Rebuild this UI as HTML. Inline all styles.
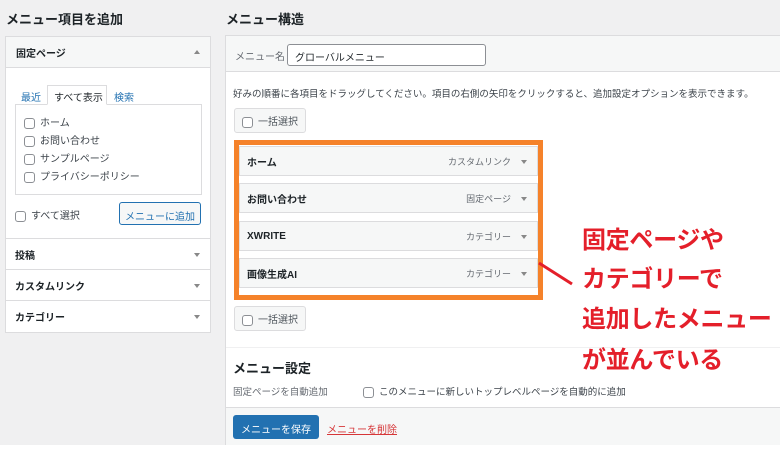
<!DOCTYPE html>
<html><head><meta charset="utf-8"><style>
*{box-sizing:border-box;margin:0;padding:0}
body{width:780px;height:455px;background:#fff;font-family:"Liberation Sans","Noto Sans CJK JP",sans-serif;color:#1d2327;position:relative;overflow:hidden;font-size:10px}
.a{position:absolute}
.bg{left:0;top:0;width:780px;height:445px;background:#f0f0f1}
h2{font-size:13px;font-weight:bold}
.box{background:#fff;border:1px solid #dcdcde}
.cb{display:inline-block;width:11px;height:11px;border:1px solid #8c8f94;border-radius:3px;background:#fff;vertical-align:middle;margin-right:5px}
.sec{left:6px;width:204px;height:31px;border-top:1px solid #dcdcde;font-weight:bold;font-size:10px;padding:0 0 0 9px;display:flex;align-items:center}
.tri{position:absolute;right:10px;top:14px;width:0;height:0;border-left:3px solid transparent;border-right:3px solid transparent;border-top:4px solid #888}
.item{left:239px;width:299px;height:30px;background:#f6f7f7;border:1px solid #dcdcde;font-weight:bold;font-size:10px;padding:0 0 0 7px;display:flex;align-items:center}
.item .t{position:absolute;right:26px;top:8px;font-weight:normal;color:#646970;font-size:9px}
.item .tri{right:10px;top:13px}
.red{color:#e41f2a;font-weight:bold;font-size:24px;left:582px;white-space:nowrap;letter-spacing:-0.3px}
.btn{border:1px solid #dcdcde;background:#f6f7f7;border-radius:3px;font-size:10px;color:#50575e;padding:4px 7px}
</style></head><body>
<div class="a bg"></div>
<h2 class="a" style="left:6px;top:9px">メニュー項目を追加</h2>
<h2 class="a" style="left:226px;top:9px">メニュー構造</h2>

<div class="a box" style="left:5px;top:36px;width:206px;height:297px"></div>
<div class="a" style="left:6px;top:37px;width:204px;height:31px;background:#f6f7f7;border-bottom:1px solid #dcdcde;font-weight:bold;padding:0 0 0 10px;display:flex;align-items:center">固定ページ<span style="position:absolute;right:10px;top:13px;border-left:3px solid transparent;border-right:3px solid transparent;border-bottom:4px solid #888"></span></div>
<div class="a" style="left:21px;top:89px;color:#2271b1">最近</div>
<div class="a" style="left:47px;top:85px;width:60px;height:20px;border:1px solid #dcdcde;border-bottom:1px solid #fff;background:#fff;padding:3px 0 0 6px;z-index:2">すべて表示</div>
<div class="a" style="left:114px;top:89px;color:#2271b1">検索</div>
<div class="a" style="left:15px;top:104px;width:187px;height:91px;border:1px solid #dcdcde;background:#fff"></div>
<div class="a" style="left:24px;top:115px;line-height:18px;color:#3c434a">
<div><span class="cb"></span>ホーム</div><div><span class="cb"></span>お問い合わせ</div><div><span class="cb"></span>サンプルページ</div><div><span class="cb"></span>プライバシーポリシー</div></div>
<div class="a" style="left:15px;top:207px;color:#3c434a"><span class="cb"></span>すべて選択</div>
<div class="a" style="left:119px;top:202px;width:82px;height:23px;border:1px solid #2271b1;border-radius:3px;background:#f6f7f7;color:#2271b1;text-align:center;padding-top:5px">メニューに追加</div>
<div class="a sec" style="top:238px">投稿<span class="tri"></span></div>
<div class="a sec" style="top:269px">カスタムリンク<span class="tri"></span></div>
<div class="a sec" style="top:300px">カテゴリー<span class="tri"></span></div>

<div class="a box" style="left:225px;top:35px;width:560px;height:410px;border-right:none"></div>
<div class="a" style="left:226px;top:36px;width:554px;height:36px;background:#f6f7f7;border-bottom:1px solid #dcdcde"></div>
<div class="a" style="left:235px;top:48px;color:#646970">メニュー名</div>
<div class="a" style="left:287px;top:44px;width:199px;height:22px;border:1px solid #8c8f94;border-radius:3px;background:#fff;padding:4px 0 0 7px">グローバルメニュー</div>
<div class="a" style="left:233px;top:86px;font-size:9.5px;color:#3c434a;white-space:nowrap">好みの順番に各項目をドラッグしてください。項目の右側の矢印をクリックすると、追加設定オプションを表示できます。</div>
<div class="a btn" style="left:234px;top:108px"><span class="cb"></span>一括選択</div>

<div class="a" style="left:234px;top:140px;width:309px;height:160px;border:5px solid #f5822a"></div>
<div class="a item" style="top:146px">ホーム<span class="t">カスタムリンク</span><span class="tri"></span></div>
<div class="a item" style="top:183px">お問い合わせ<span class="t">固定ページ</span><span class="tri"></span></div>
<div class="a item" style="top:221px">XWRITE<span class="t">カテゴリー</span><span class="tri"></span></div>
<div class="a item" style="top:258px">画像生成AI<span class="t">カテゴリー</span><span class="tri"></span></div>

<div class="a btn" style="left:234px;top:306px"><span class="cb"></span>一括選択</div>
<div class="a" style="left:226px;top:347px;width:554px;border-top:1px solid #f0f0f1"></div>
<div class="a" style="left:233px;top:358px;font-size:13px;font-weight:bold">メニュー設定</div>
<div class="a" style="left:233px;top:384px;color:#646970;font-size:9.5px">固定ページを自動追加</div>
<div class="a" style="left:363px;top:384px;color:#3c434a;font-size:9.5px"><span class="cb"></span>このメニューに新しいトップレベルページを自動的に追加</div>
<div class="a" style="left:226px;top:407px;width:554px;height:38px;background:#f6f7f7;border-top:1px solid #dcdcde"></div>
<div class="a" style="left:233px;top:415px;width:86px;height:24px;background:#2271b1;border-radius:3px;color:#fff;text-align:center;padding-top:6px">メニューを保存</div>
<div class="a" style="left:327px;top:421px;color:#d63638;text-decoration:underline">メニューを削除</div>

<svg class="a" style="left:0;top:0" width="780" height="455"><line x1="539" y1="263" x2="572" y2="284" stroke="#e41f2a" stroke-width="3"/></svg>
<div class="a red" style="top:220px">固定ページや</div>
<div class="a red" style="top:259px">カテゴリーで</div>
<div class="a red" style="top:299px">追加したメニュー</div>
<div class="a red" style="top:340px">が並んでいる</div>
</body></html>
